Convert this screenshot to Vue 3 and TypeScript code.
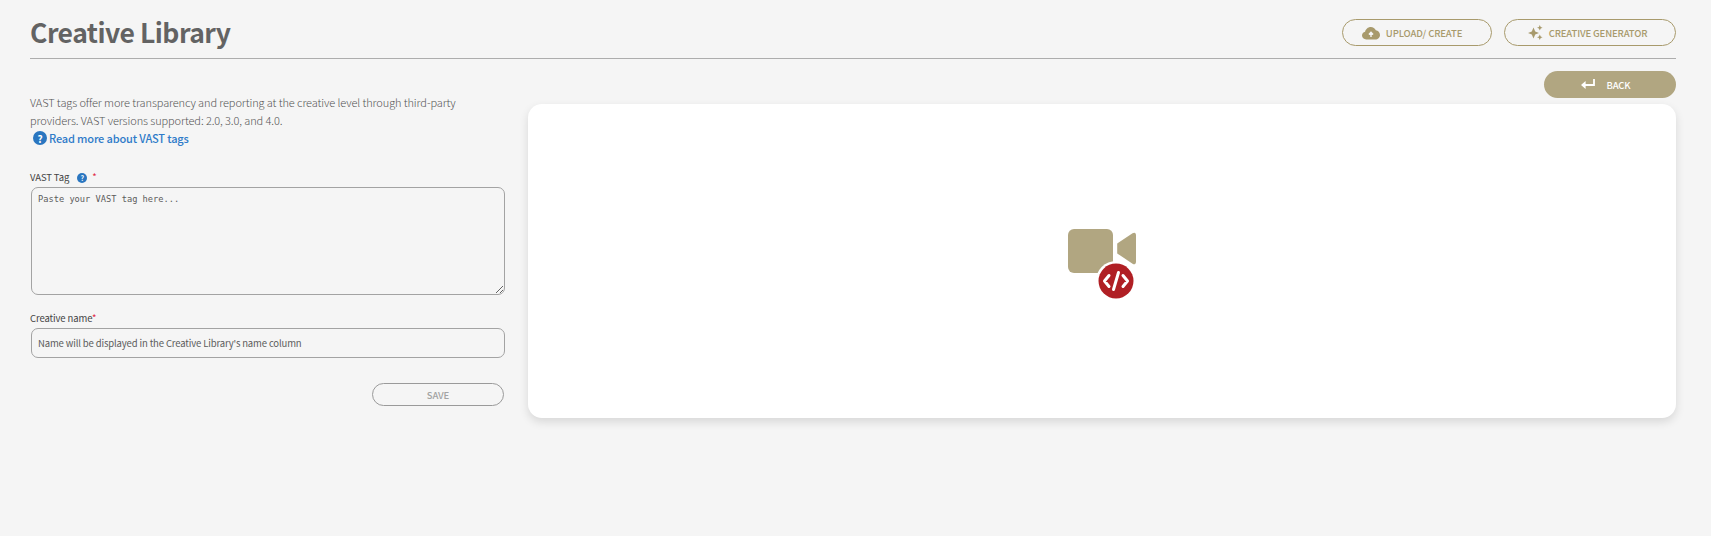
<template>
  <div class="page">
    <header class="top">
      <h1>Creative Library</h1>
      <div class="top-actions">
        <button class="outline upload">
          <svg width="18" height="14" viewBox="0 0 18 14">
            <path d="M4.2 13.5C1.9 13.5 0 11.8 0 9.6c0-1.9 1.3-3.4 3.1-3.8C3.6 3.2 5.9 1 8.8 1c2.3 0 4.2 1.3 5 3.3 2.3.2 4.2 2.2 4.2 4.6 0 2.6-2.1 4.6-4.7 4.6z" fill="#a89a6c" />
            <path d="M9 11V6.6M6.9 8.5 9 6.3l2.1 2.2" fill="none" stroke="#f5f5f5" stroke-width="1.4" />
          </svg>
          UPLOAD/ CREATE
        </button>
        <button class="outline generator">
          <svg width="15" height="15" viewBox="0 0 15 15" fill="#a89a6c">
            <path d="M5.5 2.6 7.2 6.4 11 8 7.2 9.6 5.5 13.4 3.8 9.6 0 8 3.8 6.4z" />
            <path d="M11.8 0 12.7 2 14.6 2.8 12.7 3.6 11.8 5.6 10.9 3.6 9 2.8 10.9 2z" />
            <path d="M11.8 9.6 12.7 11.5 14.6 12.3 12.7 13.1 11.8 15 10.9 13.1 9 12.3 10.9 11.5z" />
          </svg>
          CREATIVE GENERATOR
        </button>
      </div>
    </header>

    <div class="content">
      <section class="form">
        <p class="intro">
          VAST tags offer more transparency and reporting at the creative level through third-party
          providers. VAST versions supported: 2.0, 3.0, and 4.0.
        </p>
        <a class="read-more">
          <span class="help big">?</span>
          Read more about VAST tags
        </a>

        <label class="field-label tag-label">
          VAST Tag <span class="help small">?</span> <span class="req tag-req">*</span>
        </label>
        <textarea v-model="vastTag" placeholder="Paste your VAST tag here..."></textarea>

        <label class="field-label name-label">Creative name<span class="req">*</span></label>
        <input v-model="creativeName" type="text" placeholder="Name will be displayed in the Creative Library's name column" />

        <div class="save-row">
          <button class="save" disabled>SAVE</button>
        </div>
      </section>

      <section class="preview">
        <div class="back-row">
          <button class="back">
            <svg width="14" height="11" viewBox="0 0 14 11">
              <path d="M13 0v6H3" fill="none" stroke="#fff" stroke-width="1.8" />
              <path d="M4.6 2v8L0 6z" fill="#fff" />
            </svg>
            BACK
          </button>
        </div>
        <div class="card">
          <svg width="70" height="70" viewBox="0 0 70 70">
            <rect x="0" y="0" width="45" height="44" rx="6" fill="#b1a681" />
            <path d="M50 15 65 5c1.4-.9 2.2-.4 2.2 1.2v26.6c0 1.6-.8 2.1-2.2 1.2L50 24z" fill="#b1a681" stroke="#b1a681" stroke-width="1.6" stroke-linejoin="round" />
            <circle cx="48" cy="52" r="20" fill="#fff" />
            <circle cx="48" cy="52" r="17.5" fill="#b01f24" />
            <path d="M41 46.5 36.5 52l4.5 5.5M55 46.5l4.5 5.5-4.5 5.5M50.5 43.5l-5 17" fill="none" stroke="#fff" stroke-width="3" stroke-linecap="round" stroke-linejoin="round" />
          </svg>
        </div>
      </section>
    </div>
  </div>
</template>

<script setup lang="ts">
import { ref } from 'vue'

const vastTag = ref<string>('')
const creativeName = ref<string>('')
</script>

<style>
html,
body {
  margin: 0;
  background: #f5f5f5;
}
</style>

<style scoped>
.page {
  height: 536px;
  padding: 0 35px 0 30px;
  box-sizing: border-box;
  background: #f5f5f5;
  font-family: 'Noto Sans CJK JP', 'Noto Sans', sans-serif;
  overflow: hidden;
}
.top {
  height: 58px;
  display: flex;
  justify-content: space-between;
  border-bottom: 1px solid #adadad;
}
h1 {
  margin: 11px 0 0;
  font-size: 26.5px;
  line-height: 42px;
  font-weight: 700;
  letter-spacing: -0.5px;
  color: #636363;
}
.top-actions {
  display: flex;
  gap: 12px;
  padding-top: 19px;
}
button {
  font-family: inherit;
  font-size: 9.5px;
  letter-spacing: -0.13px;
  font-weight: 500;
  border-radius: 14px;
}
.outline {
  height: 27px;
  display: flex;
  align-items: center;
  justify-content: center;
  gap: 6px;
  background: transparent;
  border: 1px solid #a89a6c;
  color: #a89a6c;
  padding: 0;
}
.upload {
  width: 150px;
  padding-right: 10px;
}
.generator {
  width: 172px;
  padding-right: 5px;
}
.content {
  display: grid;
  grid-template-columns: 475px 1fr;
  column-gap: 23px;
}
.form {
  padding-top: 34px;
  min-width: 0;
}
.intro {
  margin: 0;
  font-size: 11px;
  letter-spacing: -0.1px;
  line-height: 18px;
  font-weight: 300;
  color: #555;
}
.read-more {
  display: flex;
  align-items: center;
  gap: 2px;
  height: 18px;
  margin-left: 3px;
  font-size: 11px;
  letter-spacing: -0.16px;
  font-weight: 500;
  color: #2f7bc9;
}
.help {
  display: inline-flex;
  align-items: center;
  justify-content: center;
  border-radius: 50%;
  background: #2a76c0;
  color: #fff;
  font-weight: 700;
}
.help.big {
  width: 14px;
  height: 14px;
  font-size: 10px;
}
.help.small {
  width: 10px;
  height: 10px;
  font-size: 7px;
  margin-left: 6px;
}
.field-label {
  display: block;
  font-size: 9.5px;
  letter-spacing: -0.1px;
  line-height: 14px;
  color: #444;
}
.tag-label {
  margin-top: 23px;
  height: 14px;
}
.tag-req {
  margin-left: 3px;
}
.req {
  color: #e0243f;
}
textarea,
input {
  display: block;
  box-sizing: border-box;
  margin-left: 1px;
  width: 474px;
  background: transparent;
  border: 1px solid #a3a3a3;
  border-radius: 7px;
  color: #5c5c5c;
}
textarea {
  height: 108px;
  margin-top: 3px;
  padding: 5px 6px;
  font-family: 'DejaVu Sans Mono', monospace;
  font-size: 8.7px;
  line-height: 12px;
}
input {
  height: 30px;
  margin-top: 3px;
  padding: 0 6px;
  font-family: inherit;
  font-size: 9.5px;
  letter-spacing: -0.13px;
}
textarea::placeholder,
input::placeholder {
  color: #5c5c5c;
  opacity: 1;
}
.name-label {
  margin-top: 16px;
}
.save-row {
  display: flex;
  justify-content: flex-end;
  margin-top: 25px;
  padding-right: 1px;
}
.save {
  width: 132px;
  height: 23px;
  background: transparent;
  border: 1px solid #9a9a9a;
  color: #a3a3a3;
  padding: 0;
}
.back-row {
  display: flex;
  justify-content: flex-end;
  padding-top: 12px;
  height: 33px;
}
.back {
  width: 132px;
  height: 27px;
  display: flex;
  align-items: center;
  justify-content: center;
  gap: 11px;
  border: none;
  padding: 0 8px 0 0;
  background: #b1a681;
  color: #fff;
}
.card {
  height: 314px;
  box-sizing: border-box;
  padding: 6px 0 0 2px;
  display: flex;
  align-items: center;
  justify-content: center;
  background: #fff;
  border-radius: 14px;
  box-shadow: 0 4px 10px rgba(0, 0, 0, 0.12);
}
</style>
